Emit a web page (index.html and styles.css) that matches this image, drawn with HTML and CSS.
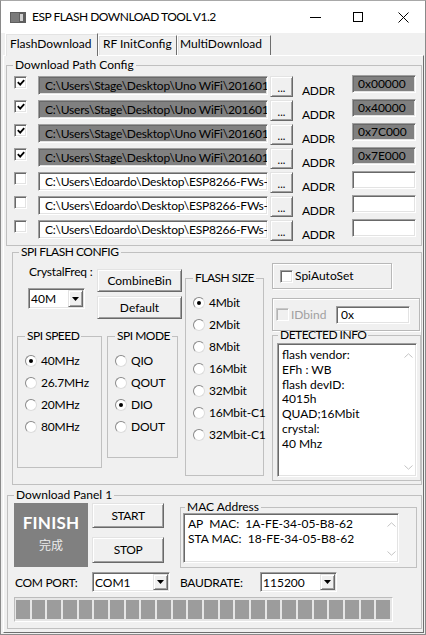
FILE: index.html
```html
<!DOCTYPE html>
<html lang="en">
<head>
<meta charset="utf-8">
<title>ESP FLASH DOWNLOAD TOOL V1.2</title>
<link rel="stylesheet" href="styles.css">
</head>
<body>
<div class="window">
  <header class="titlebar">
    <svg class="appicon" width="16" height="11" viewBox="0 0 16 11"><rect width="16" height="11" fill="#5e5e5e"/><rect x="1" y="1" width="8" height="9" fill="#7a7a7a"/><rect x="10" y="2" width="3" height="7" fill="#cfcfcf"/></svg>
    <span class="title">ESP FLASH DOWNLOAD TOOL V1.2</span>
    <div class="controls">
      <span class="ctl min"><svg width="11" height="1" viewBox="0 0 11 1"><rect width="11" height="1" fill="#000"/></svg></span>
      <span class="ctl max"><svg width="10" height="10" viewBox="0 0 10 10"><rect x="0.5" y="0.5" width="9" height="9" fill="none" stroke="#000"/></svg></span>
      <span class="ctl close"><svg width="11" height="11" viewBox="0 0 11 11"><path d="M0.5 0.5L10.5 10.5M10.5 0.5L0.5 10.5" stroke="#000" stroke-width="1"/></svg></span>
    </div>
  </header>

  <nav class="tabs">
    <div class="tab active t1">FlashDownload</div>
    <div class="tab t2">RF InitConfig</div>
    <div class="tab t3">MultiDownload</div>
  </nav>

  <main class="panel">
    <fieldset class="grp paths">
      <legend>Download Path Config</legend>
      <div class="rows">
        <div class="row">
          <span class="cb on"><svg width="8" height="7" viewBox="0 0 8 7"><path d="M0.8 3.2L3.2 5.6L7.2 1.2" fill="none" stroke="#000" stroke-width="1.8"/></svg></span>
          <div class="field gray path">C:\Users\Stage\Desktop\Uno WiFi\2016012</div>
          <div class="btn dots">...</div>
          <span class="addrlbl">ADDR</span>
          <div class="field gray addr">0x00000</div>
        </div>
        <div class="row">
          <span class="cb on"><svg width="8" height="7" viewBox="0 0 8 7"><path d="M0.8 3.2L3.2 5.6L7.2 1.2" fill="none" stroke="#000" stroke-width="1.8"/></svg></span>
          <div class="field gray path">C:\Users\Stage\Desktop\Uno WiFi\2016012</div>
          <div class="btn dots">...</div>
          <span class="addrlbl">ADDR</span>
          <div class="field gray addr">0x40000</div>
        </div>
        <div class="row">
          <span class="cb on"><svg width="8" height="7" viewBox="0 0 8 7"><path d="M0.8 3.2L3.2 5.6L7.2 1.2" fill="none" stroke="#000" stroke-width="1.8"/></svg></span>
          <div class="field gray path">C:\Users\Stage\Desktop\Uno WiFi\2016012</div>
          <div class="btn dots">...</div>
          <span class="addrlbl">ADDR</span>
          <div class="field gray addr">0x7C000</div>
        </div>
        <div class="row">
          <span class="cb on"><svg width="8" height="7" viewBox="0 0 8 7"><path d="M0.8 3.2L3.2 5.6L7.2 1.2" fill="none" stroke="#000" stroke-width="1.8"/></svg></span>
          <div class="field gray path">C:\Users\Stage\Desktop\Uno WiFi\2016012</div>
          <div class="btn dots">...</div>
          <span class="addrlbl">ADDR</span>
          <div class="field gray addr">0x7E000</div>
        </div>
        <div class="row">
          <span class="cb"></span>
          <div class="field path">C:\Users\Edoardo\Desktop\ESP8266-FWs-T</div>
          <div class="btn dots">...</div>
          <span class="addrlbl">ADDR</span>
          <div class="field addr"></div>
        </div>
        <div class="row">
          <span class="cb"></span>
          <div class="field path">C:\Users\Edoardo\Desktop\ESP8266-FWs-T</div>
          <div class="btn dots">...</div>
          <span class="addrlbl">ADDR</span>
          <div class="field addr"></div>
        </div>
        <div class="row">
          <span class="cb"></span>
          <div class="field path">C:\Users\Edoardo\Desktop\ESP8266-FWs-T</div>
          <div class="btn dots">...</div>
          <span class="addrlbl">ADDR</span>
          <div class="field addr"></div>
        </div>
      </div>
    </fieldset>

    <fieldset class="grp spi">
      <legend>SPI FLASH CONFIG</legend>
      <div class="spi-body">
        <div class="colA">
          <div class="topA">
            <div class="xtal">
              <div class="xtal-lbl">CrystalFreq :</div>
              <div class="select sel-xtal"><span class="sel-val">40M</span><span class="dd"><svg width="7" height="4" viewBox="0 0 7 4"><path d="M0 0H7L3.5 4Z" fill="#000"/></svg></span></div>
            </div>
            <div class="btnsA">
              <div class="btn bA">CombineBin</div>
              <div class="btn bA">Default</div>
            </div>
          </div>
          <div class="bottomA">
            <fieldset class="grp sub speed">
              <legend>SPI SPEED</legend>
              <div class="radios">
                <div class="radio"><span class="rb on"></span>40MHz</div>
                <div class="radio"><span class="rb"></span>26.7MHz</div>
                <div class="radio"><span class="rb"></span>20MHz</div>
                <div class="radio"><span class="rb"></span>80MHz</div>
              </div>
            </fieldset>
            <fieldset class="grp sub mode">
              <legend>SPI MODE</legend>
              <div class="radios">
                <div class="radio"><span class="rb"></span>QIO</div>
                <div class="radio"><span class="rb"></span>QOUT</div>
                <div class="radio"><span class="rb on"></span>DIO</div>
                <div class="radio"><span class="rb"></span>DOUT</div>
              </div>
            </fieldset>
          </div>
        </div>

        <fieldset class="grp sub fsize">
          <legend>FLASH SIZE</legend>
          <div class="radios">
            <div class="radio"><span class="rb on"></span>4Mbit</div>
            <div class="radio"><span class="rb"></span>2Mbit</div>
            <div class="radio"><span class="rb"></span>8Mbit</div>
            <div class="radio"><span class="rb"></span>16Mbit</div>
            <div class="radio"><span class="rb"></span>32Mbit</div>
            <div class="radio"><span class="rb"></span>16Mbit-C1</div>
            <div class="radio"><span class="rb"></span>32Mbit-C1</div>
          </div>
        </fieldset>

        <div class="colC">
          <div class="box autoset"><span class="cb"></span><span class="cb-lbl">SpiAutoSet</span></div>
          <div class="box idbind"><span class="cb dis"></span><span class="cb-lbl dim">IDbind</span><div class="field idval">0x</div></div>
          <fieldset class="grp sub detected">
            <legend>DETECTED INFO</legend>
            <div class="memo info">
              <div class="memo-txt">flash vendor:<br>EFh : WB<br>flash devID:<br>4015h<br>QUAD;16Mbit<br>crystal:<br>40 Mhz</div>
              <div class="sb">
                <svg width="9" height="5" viewBox="0 0 9 5"><path d="M0.5 4.5L4.5 0.8L8.5 4.5" fill="none" stroke="#c4c4c4"/></svg>
                <svg width="9" height="5" viewBox="0 0 9 5"><path d="M0.5 0.5L4.5 4.2L8.5 0.5" fill="none" stroke="#c4c4c4"/></svg>
              </div>
            </div>
          </fieldset>
        </div>
      </div>
    </fieldset>

    <fieldset class="grp dl">
      <legend>Download Panel 1</legend>
      <div class="dl-body">
        <div class="row1">
          <div class="finish"><span class="fin-en">FINISH</span><span class="fin-cn">完成</span></div>
          <div class="btnsB">
            <div class="btn start">START</div>
            <div class="btn stop">STOP</div>
          </div>
          <fieldset class="grp sub mac">
            <legend>MAC Address</legend>
            <div class="memo macmemo">
              <div class="memo-txt mac-txt">AP  MAC:  1A-FE-34-05-B8-62
STA MAC:  18-FE-34-05-B8-62</div>
              <div class="sb sb-mac">
                <svg width="9" height="5" viewBox="0 0 9 5"><path d="M0.5 4.5L4.5 0.8L8.5 4.5" fill="none" stroke="#c4c4c4"/></svg>
                <svg width="9" height="5" viewBox="0 0 9 5"><path d="M0.5 0.5L4.5 4.2L8.5 0.5" fill="none" stroke="#c4c4c4"/></svg>
              </div>
            </div>
          </fieldset>
        </div>
        <div class="row2">
          <span class="lbl-com">COM PORT:</span>
          <div class="select sel-com"><span class="sel-val">COM1</span><span class="dd"><svg width="7" height="4" viewBox="0 0 7 4"><path d="M0 0H7L3.5 4Z" fill="#000"/></svg></span></div>
          <span class="lbl-baud">BAUDRATE:</span>
          <div class="select sel-baud"><span class="sel-val">115200</span><span class="dd"><svg width="7" height="4" viewBox="0 0 7 4"><path d="M0 0H7L3.5 4Z" fill="#000"/></svg></span></div>
        </div>
        <div class="progress">
          <span class="seg"></span><span class="seg"></span><span class="seg"></span><span class="seg"></span>
          <span class="seg"></span><span class="seg"></span><span class="seg"></span><span class="seg"></span>
          <span class="seg"></span><span class="seg"></span><span class="seg"></span><span class="seg"></span>
          <span class="seg"></span><span class="seg"></span><span class="seg"></span><span class="seg"></span>
          <span class="seg"></span><span class="seg"></span><span class="seg"></span><span class="seg"></span>
          <span class="seg"></span><span class="seg"></span><span class="seg"></span><span class="seg"></span>
        </div>
      </div>
    </fieldset>
  </main>
</div>
</body>
</html>
```

FILE: styles.css
```css
* { box-sizing: border-box; }
html, body { margin: 0; padding: 0; }
body {
  width: 426px; height: 635px; overflow: hidden;
  background: #f0f0f0;
  font-family: Lato, "Liberation Sans", sans-serif;
  font-size: 12px; line-height: 14px; color: #000;
}
.window {
  width: 426px; height: 635px;
  border: 1px solid #8a8a8a; border-top-color: #a8a8a8;
  display: flex; flex-direction: column;
  background: #f0f0f0;
}

/* title bar */
.titlebar { flex: none; height: 32px; background: #fff; display: flex; align-items: center; }
.appicon { margin-left: 9px; margin-right: 6px; flex: none; }
.title { letter-spacing: -0.5px; }
.controls { margin-left: auto; display: flex; height: 100%; }
.ctl { display: flex; align-items: center; justify-content: center; width: 46px; }
.ctl.min { width: 38px; }
.ctl.max { width: 47px; }
.ctl.close { width: 44px; }

/* tabs */
.tabs { flex: none; height: 22px; display: flex; align-items: flex-end; padding-left: 4px; position: relative; z-index: 1; }
.tab {
  height: 20px; padding: 1px 0 0 4px;
  border: 1px solid; border-bottom: none;
  border-color: #fff #6e6e6e transparent #fff;
  box-shadow: inset 1px 1px 0 #e3e3e3;
  white-space: nowrap;
}
.tab.active { height: 23px; margin-bottom: -1px; padding-top: 3px; background: #f0f0f0; }
.t1 { width: 93px; }
.t2 { width: 79px; }
.t3 { width: 94px; padding-left: 2px; }

/* main panel */
.panel {
  flex: 1; margin: 0 1px 1px 2px;
  border: 1px solid; border-color: #fff #6e6e6e #6e6e6e #fff;
  display: flex; flex-direction: column;
}

.grp { margin: 0; padding: 0; border: 1px solid #c0c0c0; min-width: 0; }
.grp > legend { padding: 0 2px; margin-left: 6px; line-height: 14px; }
.sub > legend { margin-left: 7px; letter-spacing: -0.5px; }
.spi > legend { letter-spacing: -0.5px; }

/* sunken fields */
.field {
  height: 19px; background: #fff;
  border: 1px solid; border-color: #a0a0a0 #fff #fff #a0a0a0;
  box-shadow: inset 1px 1px 0 #696969, inset -1px -1px 0 #e3e3e3;
  overflow: hidden; white-space: nowrap;
}
.field.gray { background: #808080; }

/* raised buttons */
.btn {
  background: #f0f0f0;
  border: 1px solid; border-color: #e3e3e3 #696969 #696969 #e3e3e3;
  box-shadow: inset 1px 1px 0 #fff, inset -1px -1px 0 #a0a0a0;
  display: flex; align-items: center; justify-content: center;
  white-space: nowrap;
}

/* checkbox */
.cb {
  flex: none; width: 13px; height: 13px; background: #fff;
  border: 1px solid; border-color: #a0a0a0 #fff #fff #a0a0a0;
  box-shadow: inset 1px 1px 0 #696969, inset -1px -1px 0 #e3e3e3;
  display: flex; align-items: center; justify-content: center;
}
.cb.dis { background: #f0f0f0; border-color: #c8c8c8 #fff #fff #c8c8c8; box-shadow: inset 1px 1px 0 #b4b4b4; }

/* group 1 */
.paths { margin: 2px 0 0 2px; width: 416px; height: 188px; }
.rows { padding-top: 3px; }
.row { display: flex; align-items: flex-start; height: 24px; }
.row .cb { margin: 1px 0 0 7px; }
.path { width: 230px; margin: 1px 0 0 11px; padding-left: 6px; line-height: 17px; letter-spacing: -0.2px; }
.dots { width: 23px; height: 21px; margin: 1px 0 0 2px; font-size: 11px; padding-top: 2px; }
.addrlbl { width: 50px; margin: 9px 0 0 9px; letter-spacing: -0.3px; }
.addr { width: 64px; height: 18px; padding-left: 5px; line-height: 16px; }

/* SPI group */
.spi { margin: -1px 0 0 8px; width: 410px; height: 240px; }
.spi-body { display: flex; align-items: flex-start; padding-left: 4px; }
.colA { width: 165px; flex: none; }
.topA { display: flex; align-items: flex-start; }
.xtal { width: 80px; flex: none; }
.xtal-lbl { margin: 6px 0 0 12px; letter-spacing: -0.2px; }
.btnsA { margin-top: 10px; display: flex; flex-direction: column; gap: 4px; }
.bA { width: 85px; height: 23px; }
.bottomA { display: flex; align-items: flex-start; margin-top: 10px; }
.speed { width: 85px; height: 139px; }
.mode { width: 71px; height: 129px; margin-left: 5px; }
.fsize { width: 79px; height: 205px; margin: 12px 0 0 3px; flex: none; }

.radios { padding: 7px 0 0 7px; }
.radio { height: 22px; display: flex; align-items: center; white-space: nowrap; letter-spacing: -0.2px; }
.rb {
  flex: none; width: 12px; height: 12px; border-radius: 50%; background: #fff;
  border: 1px solid; border-color: #8a8a8a #dcdcdc #dcdcdc #8a8a8a;
  margin-right: 4px; display: flex; align-items: center; justify-content: center;
}
.rb.on::after { content: ""; width: 4px; height: 4px; border-radius: 50%; background: #000; }

/* select */
.select {
  height: 21px; background: #fff; display: flex; align-items: center;
  border: 1px solid; border-color: #a0a0a0 #fff #fff #a0a0a0;
  box-shadow: inset 1px 1px 0 #696969, inset -1px -1px 0 #e3e3e3;
  padding: 0 1px 0 2px;
}
.sel-val { padding-top: 1px; }
.dd {
  margin-left: auto; width: 15px; height: 17px; background: #f0f0f0;
  border: 1px solid; border-color: #e3e3e3 #696969 #696969 #e3e3e3;
  box-shadow: inset 1px 1px 0 #fff, inset -1px -1px 0 #a0a0a0;
  display: flex; align-items: center; justify-content: center;
}
.sel-xtal { width: 57px; margin: 9px 0 0 11px; }

/* right column */
.colC { width: 149px; margin-left: 8px; flex: none; }
.box {
  border: 1px solid #b8b8b8; box-shadow: 1px 1px 0 #fff, inset 1px 1px 0 #fff;
  display: flex; align-items: center;
}
.autoset { width: 120px; height: 26px; margin-top: 4px; padding-left: 7px; }
.cb-lbl { margin-left: 2px; }
.idbind { width: 148px; height: 33px; margin-top: 9px; padding-left: 3px; }
.dim { color: #a0a0a0; }
.idval { width: 74px; height: 18px; margin: 0 9px 0 auto; padding-left: 4px; line-height: 16px; }
.detected { width: 149px; height: 153px; margin-top: -3px; }
.detected > legend { margin-left: 5px; }

.memo {
  display: flex; background: #fff;
  border: 1px solid; border-color: #a0a0a0 #fff #fff #a0a0a0;
  box-shadow: inset 1px 1px 0 #696969, inset -1px -1px 0 #e3e3e3;
}
.memo-txt { flex: 1; min-width: 0; }
.info { width: 140px; height: 134px; margin: 1px 0 0 4px; }
.info .memo-txt { padding: 4px 0 0 4px; line-height: 14.8px; }
.sb { width: 16px; flex: none; display: flex; flex-direction: column; justify-content: space-between; align-items: center; padding: 9px 0 6px; }

/* download panel */
.dl { margin: 3px 0 0 3px; width: 415px; height: 141px; }
.dl-body { padding-left: 6px; }
.row1 { display: flex; align-items: flex-start; margin-top: 1px; }
.finish {
  width: 74px; height: 64px; background: #808080; color: #fff;
  display: flex; flex-direction: column; align-items: center; padding-top: 10px; flex: none;
}
.fin-en { font-weight: bold; font-size: 17px; line-height: 20px; letter-spacing: 0.2px; }
.fin-cn { font-family: "Noto Sans CJK SC", sans-serif; font-size: 12px; line-height: 16px; margin-top: 4px; color: #ececec; }
.btnsB { margin-left: 4px; width: 72px; flex: none; }
.start { height: 25px; letter-spacing: -0.4px; }
.stop { height: 26px; margin-top: 9px; letter-spacing: -0.4px; }
.mac { width: 237px; height: 68px; margin: -3px 0 0 16px; flex: none; }
.mac > legend { margin-left: 4px; letter-spacing: 0; }
.macmemo { width: 216px; height: 50px; margin: -1px 0 0 2px; }
.mac-txt { white-space: pre; padding: 2px 0 0 4px; line-height: 15px; }
.sb-mac { width: 14px; padding: 8px 0 6px; }

.row2 { display: flex; align-items: center; margin-top: 4px; height: 20px; }
.lbl-com { width: 77px; margin-left: 1px; padding-top: 1px; letter-spacing: -0.3px; }
.sel-com { width: 78px; height: 20px; }
.lbl-baud { width: 80px; margin-left: 10px; padding-top: 1px; letter-spacing: -0.3px; }
.sel-baud { width: 77px; height: 20px; }
.row2 .dd { height: 16px; }

.progress {
  margin-top: 5px; width: 379px; height: 25px;
  border: 1px solid; border-color: #bcbcbc #fff #fff #bcbcbc;
  background: #e6e6e6; display: flex; gap: 2px; padding: 2px 2px 2px 1px;
}
.seg { flex: 1; background: #9c9c9c; }
```
